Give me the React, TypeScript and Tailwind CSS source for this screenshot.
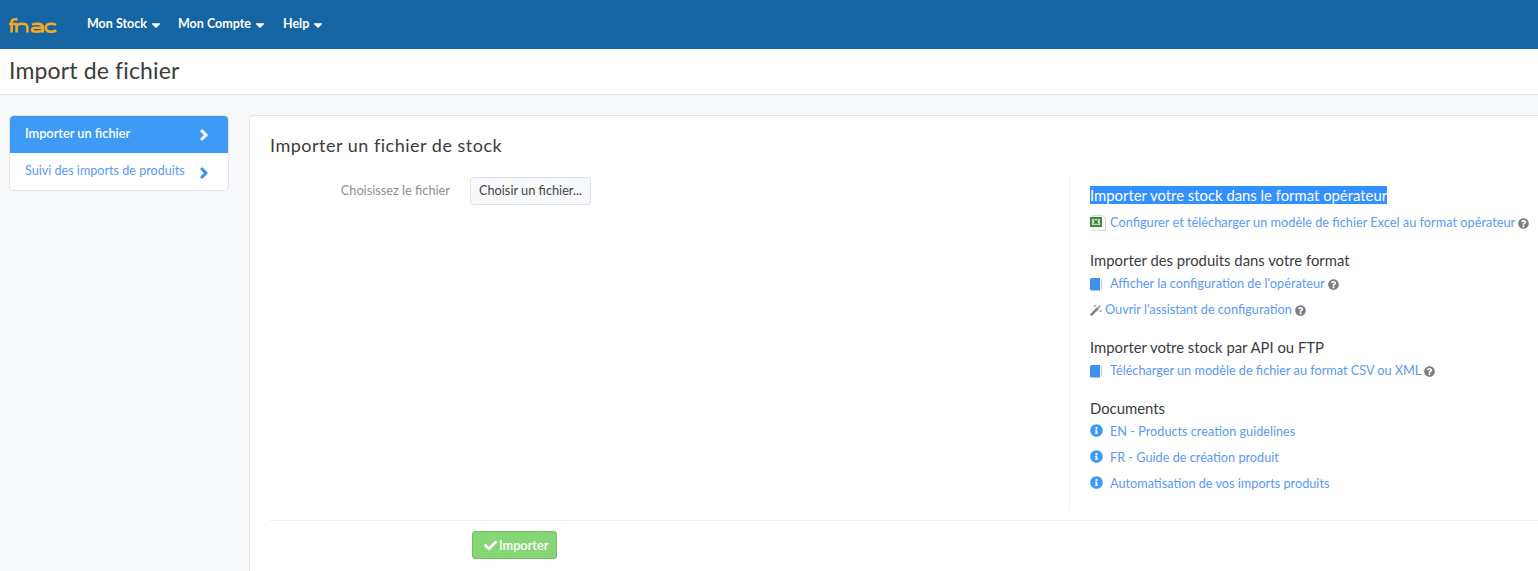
import { FaCaretDown, FaCheck, FaChevronRight, FaInfoCircle, FaQuestionCircle } from "react-icons/fa";

const FnacLogo = () => (
  <svg width="48" height="16" viewBox="0 0 48 16" fill="none" stroke="#f7a823" strokeWidth="2.6">
    <path d="M2.6 15.4V5.5C2.6 3 3.8 2.2 6 2.2H8.5M0 7H8" />
    <path d="M7.6 15.4V7M7.6 10.5C7.6 8 10 6.8 13 6.8C16.4 6.8 18.4 8 18.4 10.5V15.4" />
    <path d="M23.2 7.6C26 6.4 33.8 6 33.8 10.4V15.4M33.8 10.8H27C24.2 10.8 23 11.5 23 12.7C23 14 24.4 14.7 27 14.7C30.6 14.7 33.8 14 33.8 12" />
    <path d="M47 8C45.5 7 44.2 6.8 42.4 6.8C38.6 6.8 36.8 8.4 36.8 10.8C36.8 13.2 38.6 14.8 42.4 14.8C44.2 14.8 45.8 14.4 47.2 13.4" />
  </svg>
);

const ExcelIcon = () => (
  <svg width="16" height="16" viewBox="0 0 16 16" className="shrink-0">
    <path d="M3 .5H12.5L15.5 3V15.5H3Z" fill="#fdfdfb" stroke="#d6d6d0" />
    <rect x="0" y="2" width="12" height="10" fill="#3f8a3f" />
    <rect x="2" y="4" width="8" height="6" fill="#cfe3c4" />
    <path d="M4 5L8 9M8 5L4 9" stroke="#2a6a2e" strokeWidth="1.2" />
  </svg>
);

const BookIcon = () => (
  <svg width="12" height="13" viewBox="0 0 12 13" className="shrink-0 mr-[8px]">
    <path d="M2 0H10V12.5H2C.9 12.5 0 12 0 11V2C0 .9.9 0 2 0Z" fill="#3d8ff0" />
    <rect x="10.8" y="1" width="1" height="10.5" fill="#b9c4d2" />
  </svg>
);

const WandIcon = () => (
  <svg width="12" height="12" viewBox="0 0 12 12" className="shrink-0 mr-[3px]">
    <path d="M.8 11.2L8 4" stroke="#7f8488" strokeWidth="2.6" />
    <path d="M8 4L10.4 1.6" stroke="#b5b8bb" strokeWidth="2.6" />
    <path d="M3.5 2H6M4.8.8V3.2M9.5 7H12M10.8 5.8V8.2" stroke="#a5a8ab" strokeWidth="1" />
  </svg>
);

const navItems = [
  { label: "Mon Stock", width: "w-[91px]" },
  { label: "Mon Compte", width: "w-[105px]" },
  { label: "Help", width: "w-[50px]" },
];

const Help = () => <FaQuestionCircle className="inline-block w-[11px] h-[11px] text-[#7a7f85] ml-[3px] shrink-0" />;

const Heading = ({ children, selected }: { children: string; selected?: boolean }) => (
  <h4 className="text-[14.85px] leading-[20px] text-[#3c3c3c]">
    {selected ? <span className="bg-[#3390ff] text-white">{children}</span> : children}
  </h4>
);

const DocLink = ({ children }: { children: string }) => (
  <div className="flex items-center h-[26px]">
    <FaInfoCircle className="w-[13px] h-[13px] text-[#3d9bf6] mr-[7px] mb-[3px] shrink-0" />
    <a className="text-[12.7px] text-[#5a9af4]">{children}</a>
  </div>
);

export default function App() {
  return (
    <div className="h-[571px] overflow-hidden bg-[#f8f9fb] font-['Lato',sans-serif]">
      <header className="h-[49px] bg-[#1565a4] flex items-center">
        <div className="ml-[9px] w-[48px] mt-[1px]">
          <FnacLogo />
        </div>
        <nav className="flex ml-[30px]">
          {navItems.map((n) => (
            <a key={n.label} className={`flex items-center text-white text-[12.5px] font-bold ${n.width}`}>
              {n.label}
              <FaCaretDown className="w-[14px] h-[14px] ml-[2px]" />
            </a>
          ))}
        </nav>
      </header>

      <div className="h-[46px] bg-white border-b border-[#dfe3eb] pl-[9px] flex items-center">
        <h1 className="text-[23px] tracking-[0.15px] text-[#3c3c3c] mt-[-3px]">Import de fichier</h1>
      </div>

      <div className="flex pl-[9px] pt-[20px] gap-[20px]">
        <aside className="w-[220px] shrink-0 self-start rounded-[5px] border border-[#dfe3eb] bg-white overflow-hidden">
          <div className="h-[38px] -m-px mb-0 bg-[#3d9bf6] flex items-center justify-between pl-[16px] pr-[19px] text-white text-[12.75px] font-semibold">
            <span className="mt-[-1px]">Importer un fichier</span>
            <FaChevronRight className="w-[12px] h-[12px] mt-[2px] stroke-[50px]" />
          </div>
          <div className="h-[37px] flex items-center justify-between pl-[15px] pr-[18px] text-[#5a9af4] text-[12.6px]">
            <span className="mt-[-1px]">Suivi des imports de produits</span>
            <FaChevronRight className="w-[12px] h-[12px] mt-[2px] text-[#3d8ff0] stroke-[50px]" />
          </div>
        </aside>

        <main className="flex-1 h-[500px] bg-white border border-[#dfe3eb] rounded-tl-[5px] border-r-0 pl-[20px]">
          <h3 className="text-[18px] tracking-[0.5px] leading-[22px] text-[#3c3c3c] mt-[18px]">Importer un fichier de stock</h3>

          <div className="flex mt-[21px] h-[332px]">
            <div className="flex w-[799px] items-start">
              <label className="w-[180px] text-right text-[12.75px] text-[#8a9098] mt-[4px]">Choisissez le fichier</label>
              <button className="ml-[20px] w-[121px] h-[28px] rounded-[3px] border border-[#dfe3eb] bg-[#f8f9fb] text-[12.75px] text-[#444]">
                Choisir un fichier...
              </button>
            </div>

            <div className="border-l border-[#eef0f4] pl-[20px] pt-[8px] flex-1 whitespace-nowrap">
              <Heading selected>Importer votre stock dans le format opérateur</Heading>
              <div className="flex items-center mt-[8px] h-[20px]">
                <ExcelIcon />
                <a className="text-[12.78px] text-[#5a9af4] ml-[4px]">Configurer et télécharger un modèle de fichier Excel au format opérateur</a>
                <Help />
              </div>

              <div className="mt-[17px]">
                <Heading>Importer des produits dans votre format</Heading>
              </div>
              <div className="flex items-center h-[26px] mt-[1px]">
                <BookIcon />
                <a className="text-[12.75px] text-[#5a9af4]">Afficher la configuration de l'opérateur</a>
                <Help />
              </div>
              <div className="flex items-center h-[26px]">
                <WandIcon />
                <a className="text-[12.7px] text-[#5a9af4]">Ouvrir l'assistant de configuration</a>
                <Help />
              </div>

              <div className="mt-[14px]">
                <Heading>Importer votre stock par API ou FTP</Heading>
              </div>
              <div className="flex items-center h-[26px] mt-[1px]">
                <BookIcon />
                <a className="text-[12.7px] text-[#5a9af4]">Télécharger un modèle de fichier au format CSV ou XML</a>
                <Help />
              </div>

              <div className="mt-[14px]">
                <Heading>Documents</Heading>
              </div>
              <div className="mt-[1px]">
                <DocLink>EN - Products creation guidelines</DocLink>
                <DocLink>FR - Guide de création produit</DocLink>
                <DocLink>Automatisation de vos imports produits</DocLink>
              </div>
            </div>
          </div>

          <div className="border-t border-[#eef0f4] mt-[11px] pt-[10px] pl-[202px]">
            <button className="w-[85px] h-[28px] rounded-[3px] border border-[#6fc060] bg-[#86d676] text-white text-[12.75px] font-semibold flex items-center pl-[11px] pt-[2px]">
              <FaCheck className="w-[13px] h-[13px] mr-[2px] mb-[2px]" />
              Importer
            </button>
          </div>
        </main>
      </div>
    </div>
  );
}
